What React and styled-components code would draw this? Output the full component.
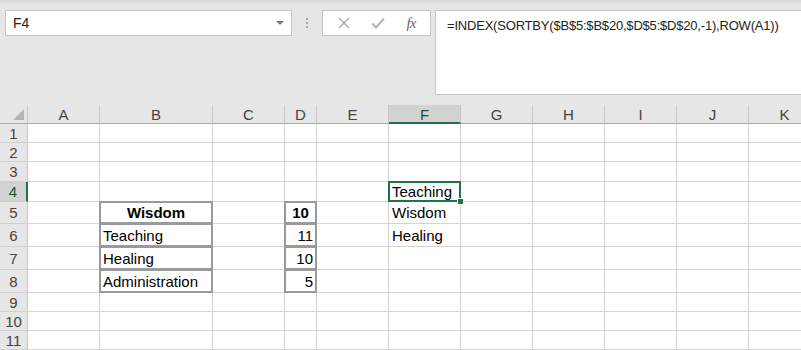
import React from 'react';
import styled, { createGlobalStyle, css } from 'styled-components';

const GlobalStyle = createGlobalStyle`
    html, body {
        margin: 0;
        padding: 0;
        background: #e6e6e6;
        font-family: "Liberation Sans", Arial, sans-serif;
    }
`;

const COLUMNS = ['A', 'B', 'C', 'D', 'E', 'F', 'G', 'H', 'I', 'J', 'K'];
const COL_WIDTHS = [72, 113, 72, 32, 72, 72, 72, 72, 72, 72, 72];
const ROW_HEIGHTS = [19, 19, 20, 20, 22, 23, 23, 23, 19, 19, 19];
const SELECTED = { col: 'F', row: 4 };

const CELLS = {
    B5: { text: 'Wisdom', bold: true, align: 'center', boxed: true },
    D5: { text: '10', bold: true, align: 'center', boxed: true },
    B6: { text: 'Teaching', boxed: true },
    D6: { text: '11', align: 'right', boxed: true },
    B7: { text: 'Healing', boxed: true },
    D7: { text: '10', align: 'right', boxed: true },
    B8: { text: 'Administration', boxed: true },
    D8: { text: '5', align: 'right', boxed: true },
    F4: { text: 'Teaching' },
    F5: { text: 'Wisdom' },
    F6: { text: 'Healing' },
};

const Frame = styled.div`
    width: 801px;
    height: 350px;
    overflow: hidden;
    background: linear-gradient(#d8d8d8 0, #e6e6e6 4px);
    display: flex;
    flex-direction: column;
`;

const Toolbar = styled.div`
    height: 105px;
    flex: none;
    box-sizing: border-box;
    padding: 10px 0 10px 5px;
    display: flex;
    align-items: flex-start;
`;

const NameBox = styled.div`
    width: 287px;
    height: 26px;
    box-sizing: border-box;
    background: #fff;
    border: 1px solid #c6c6c6;
    display: flex;
    align-items: center;
    justify-content: space-between;
    padding: 0 7px 0 7px;
    font-size: 14px;
    color: #222;
`;

const DropArrow = styled.span`
    width: 0;
    height: 0;
    border-left: 4px solid transparent;
    border-right: 4px solid transparent;
    border-top: 4px solid #777;
`;

const Grip = styled.div`
    width: 30px;
    height: 26px;
    display: flex;
    flex-direction: column;
    align-items: center;
    justify-content: center;
    gap: 2px;

    span {
        width: 2px;
        height: 2px;
        background: #a6a6a6;
    }
`;

const FxBox = styled.div`
    width: 109px;
    height: 26px;
    box-sizing: border-box;
    background: #fff;
    border: 1px solid #c6c6c6;
    display: flex;
    align-items: center;
    justify-content: space-around;
    padding: 0 4px;
`;

const FxLabel = styled.span`
    font-family: "Liberation Serif", "Times New Roman", serif;
    font-style: italic;
    font-size: 15px;
    color: #666;
    letter-spacing: -1px;
`;

const FormulaBar = styled.div`
    flex: 1;
    height: 85px;
    margin-left: 4px;
    box-sizing: border-box;
    background: #fff;
    border: 1px solid #c6c6c6;
    border-right: none;
    padding: 7px 0 0 11px;
    font-size: 13px;
    letter-spacing: -0.2px;
    color: #222;
`;

const Sheet = styled.div`
    display: grid;
    grid-template-columns: 28px ${COL_WIDTHS.map((w) => `${w}px`).join(' ')};
    grid-template-rows: 19px ${ROW_HEIGHTS.map((h) => `${h}px`).join(' ')};
    width: max-content;
    background: #fff;
`;

const Corner = styled.div`
    position: relative;
    background: #e6e6e6;
    border-right: 1px solid #c6c6c6;
    border-bottom: 1px solid #ababab;

    &::after {
        content: '';
        position: absolute;
        right: 3px;
        bottom: 3px;
        width: 0;
        height: 0;
        border-left: 11px solid transparent;
        border-bottom: 11px solid #b4b4b4;
    }
`;

const ColHeader = styled.div`
    box-sizing: border-box;
    background: ${(p) => (p.$active ? '#d2d2d2' : '#e6e6e6')};
    border-right: 1px solid #c6c6c6;
    border-bottom: ${(p) => (p.$active ? '2px solid #217346' : '1px solid #ababab')};
    font-size: 15px;
    color: ${(p) => (p.$active ? '#1f4f33' : '#444')};
    text-align: center;
    line-height: 19px;
`;

const RowHeader = styled.div`
    box-sizing: border-box;
    background: ${(p) => (p.$active ? '#d2d2d2' : '#e6e6e6')};
    border-right: ${(p) => (p.$active ? '2px solid #217346' : '1px solid #c6c6c6')};
    border-bottom: 1px solid #d0d0d0;
    font-size: 15px;
    color: ${(p) => (p.$active ? '#1f4f33' : '#444')};
    display: flex;
    align-items: center;
    justify-content: center;
`;

const Cell = styled.div`
    position: relative;
    box-sizing: border-box;
    border-right: 1px solid #d4d4d4;
    border-bottom: 1px solid #d4d4d4;
    padding: 0 3px;
    font-size: 15px;
    color: #000;
    white-space: nowrap;
    display: flex;
    align-items: center;
    justify-content: ${(p) =>
        p.$align === 'center' ? 'center' : p.$align === 'right' ? 'flex-end' : 'flex-start'};
    font-weight: ${(p) => (p.$bold ? 700 : 400)};

    ${(p) =>
        p.$boxed &&
        css`
            &::before {
                content: '';
                position: absolute;
                top: -1px;
                left: -1px;
                right: -1px;
                bottom: -1px;
                border: 2px solid #9a9a9a;
                z-index: 1;
            }
        `}

    ${(p) =>
        p.$selected &&
        css`
            &::before {
                content: '';
                position: absolute;
                top: -1px;
                left: -1px;
                right: -1px;
                bottom: -1px;
                border: 2px solid #217346;
                z-index: 2;
            }
            &::after {
                content: '';
                position: absolute;
                right: -3px;
                bottom: -3px;
                width: 5px;
                height: 5px;
                background: #217346;
                box-shadow: 0 0 0 1px #fff;
                z-index: 3;
            }
        `}
`;

const CrossIcon = () => (
    <svg width="12" height="12" viewBox="0 0 12 12">
        <path d="M1 1 L11 11 M11 1 L1 11" stroke="#a6a6a6" strokeWidth="1.2" fill="none" />
    </svg>
);

const CheckIcon = () => (
    <svg width="14" height="12" viewBox="0 0 14 12">
        <path d="M1 6.5 L5 10.5 L13 1.5" stroke="#b4b4b4" strokeWidth="2" fill="none" />
    </svg>
);

const App = () => {
    return (
        <>
            <GlobalStyle />
            <Frame>
                <Toolbar>
                    <NameBox>
                        <span>F4</span>
                        <DropArrow />
                    </NameBox>
                    <Grip>
                        <span />
                        <span />
                        <span />
                    </Grip>
                    <FxBox>
                        <CrossIcon />
                        <CheckIcon />
                        <FxLabel>fx</FxLabel>
                    </FxBox>
                    <FormulaBar>=INDEX(SORTBY($B$5:$B$20,$D$5:$D$20,-1),ROW(A1))</FormulaBar>
                </Toolbar>
                <Sheet>
                    <Corner />
                    {COLUMNS.map((c) => (
                        <ColHeader key={c} $active={c === SELECTED.col}>
                            {c}
                        </ColHeader>
                    ))}
                    {ROW_HEIGHTS.map((_, i) => {
                        const row = i + 1;
                        return (
                            <React.Fragment key={row}>
                                <RowHeader $active={row === SELECTED.row}>{row}</RowHeader>
                                {COLUMNS.map((c) => {
                                    const data = CELLS[`${c}${row}`] || {};
                                    return (
                                        <Cell
                                            key={c}
                                            $align={data.align}
                                            $bold={data.bold}
                                            $boxed={data.boxed}
                                            $selected={c === SELECTED.col && row === SELECTED.row}
                                        >
                                            {data.text}
                                        </Cell>
                                    );
                                })}
                            </React.Fragment>
                        );
                    })}
                </Sheet>
            </Frame>
        </>
    );
};

export default App;
